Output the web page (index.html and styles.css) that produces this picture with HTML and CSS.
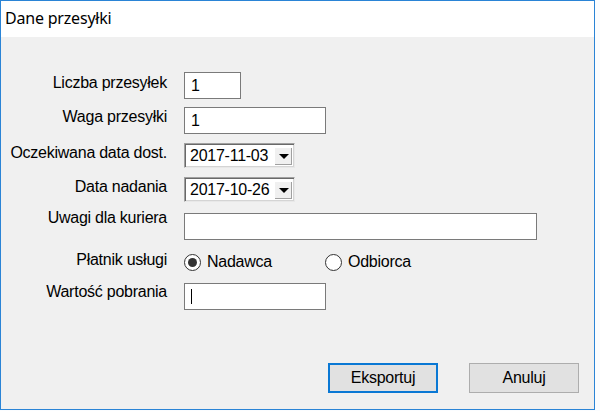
FILE: index.html
```html
<!DOCTYPE html>
<html lang="pl">
<head>
<meta charset="utf-8">
<title>Dane przesyłki</title>
<link rel="stylesheet" href="styles.css">
</head>
<body>
<div class="window">
  <div class="titlebar">Dane przesyłki</div>
  <div class="client">
    <div class="form">
      <div class="lbl pt2">Liczba przesyłek</div>
      <div class="ctl"><div class="box w56">1</div></div>

      <div class="lbl pt1">Waga przesyłki</div>
      <div class="ctl"><div class="box w141">1</div></div>

      <div class="lbl pt1">Oczekiwana data dost.</div>
      <div class="ctl"><div class="date"><span class="dval">2017-11-03</span><span class="ddrop"><span class="tri"></span></span></div></div>

      <div class="lbl pt1">Data nadania</div>
      <div class="ctl"><div class="date"><span class="dval">2017-10-26</span><span class="ddrop"><span class="tri"></span></span></div></div>

      <div class="lbl pt3">Uwagi dla kuriera</div>
      <div class="ctl mt7"><div class="box w352"></div></div>

      <div class="lbl pt2">Płatnik usługi</div>
      <div class="ctl mt4">
        <div class="radios">
          <label class="radio"><span class="circle on"></span><span>Nadawca</span></label>
          <label class="radio"><span class="circle"></span><span>Odbiorca</span></label>
        </div>
      </div>

      <div class="lbl pt1">Wartość pobrania</div>
      <div class="ctl mt1"><div class="box w141"><span class="caret"></span></div></div>
    </div>
    <div class="buttons">
      <button class="btn default">Eksportuj</button>
      <button class="btn">Anuluj</button>
    </div>
  </div>
</div>
</body>
</html>
```

FILE: styles.css
```css
html, body {
  margin: 0;
  padding: 0;
  background: #fbfdff;
}

.window {
  width: 593px;
  height: 408px;
  border: 1px solid #2a84d6;
  display: flex;
  flex-direction: column;
  background: #f0f0f0;
  font-family: "Liberation Sans", Arial, sans-serif;
  font-size: 16px;
  letter-spacing: -0.25px;
  color: #000;
}

.titlebar {
  height: 36px;
  box-sizing: border-box;
  padding: 7px 0 0 4px;
  background: #fff;
  font-family: "Noto Sans", "Open Sans", sans-serif;
  font-size: 16px;
  line-height: 20px;
  letter-spacing: -0.2px;
}

.client {
  flex: 1;
  display: flex;
  flex-direction: column;
  background: #f0f0f0;
}

.form {
  display: grid;
  grid-template-columns: 166px auto;
  grid-template-rows: 35px 36px 34px 29px 43px 33px auto;
  column-gap: 17px;
  padding-top: 35px;
}

.lbl {
  text-align: right;
  line-height: 18px;
  white-space: nowrap;
}

.pt1 { padding-top: 1px; }
.pt2 { padding-top: 2px; }
.pt3 { padding-top: 3px; }
.mt1 { margin-top: 1px; }
.mt4 { margin-top: 4px; }
.mt7 { margin-top: 7px; }

.ctl {
  display: flex;
  align-items: flex-start;
}

.box {
  height: 27px;
  box-sizing: border-box;
  border: 1px solid #7a7a7a;
  background: #fff;
  padding: 0 6px;
  line-height: 27px;
  display: flex;
  align-items: center;
}

.w56 { width: 57px; }
.w141 { width: 142px; }
.w352 { width: 353px; }

.caret {
  display: block;
  width: 1px;
  height: 15px;
  background: #000;
}

.date {
  width: 111px;
  height: 25px;
  box-sizing: border-box;
  border: 1px solid;
  border-color: #a0a0a0 #e8e8e8 #e8e8e8 #a0a0a0;
  box-shadow: inset 1px 1px 0 #696969, inset -1px -1px 0 #d4d4d4;
  background: #fff;
  display: flex;
  align-items: center;
  padding: 0 2px 0 5px;
}

.dval {
  flex: 1;
  line-height: 18px;
}

.ddrop {
  width: 17px;
  height: 17px;
  margin-top: 2px;
  background: #f0f0f0;
  box-shadow: inset -1px -1px 0 #a0a0a0;
  display: flex;
  align-items: center;
  justify-content: center;
}

.tri {
  width: 0;
  height: 0;
  border-left: 5px solid transparent;
  border-right: 5px solid transparent;
  border-top: 5px solid #000;
}

.radios {
  display: grid;
  grid-template-columns: 141px auto;
}

.radio {
  display: flex;
  align-items: center;
  gap: 6px;
  line-height: 18px;
}

.circle {
  width: 17px;
  height: 17px;
  box-sizing: border-box;
  border: 1px solid #333;
  border-radius: 50%;
  background: #fff;
  display: flex;
  align-items: center;
  justify-content: center;
}

.circle.on::after {
  content: "";
  width: 9px;
  height: 9px;
  border-radius: 50%;
  background: #333;
}

.buttons {
  margin-top: auto;
  display: flex;
  justify-content: flex-end;
  gap: 31px;
  padding: 0 15px 16px 0;
}

.btn {
  width: 110px;
  height: 30px;
  box-sizing: border-box;
  border: 1px solid #adadad;
  background: #e1e1e1;
  font-family: "Liberation Sans", Arial, sans-serif;
  font-size: 16px;
  letter-spacing: -0.25px;
  color: #000;
  padding: 0;
}

.btn.default {
  border: 2px solid #0a78d4;
}
```
